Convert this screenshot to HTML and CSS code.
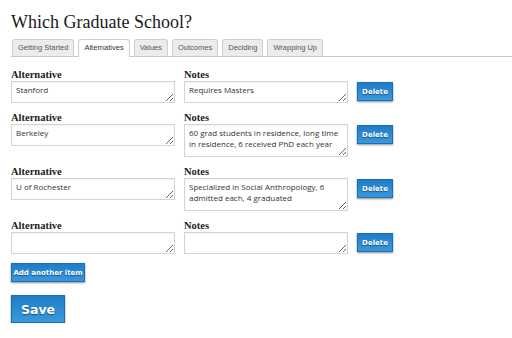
FILE: index.html
```html
<!DOCTYPE html>
<html lang="en">
<head>
    <meta charset="UTF-8">
    <title>Which Graduate School?</title>
    <link rel="stylesheet" href="styles.css">
</head>
<body>
    <div class="page">
        <h1 class="page-title">Which Graduate School?</h1>

        <ul class="tabs">
            <li class="tab">Getting Started</li>
            <li class="tab active">Alternatives</li>
            <li class="tab">Values</li>
            <li class="tab">Outcomes</li>
            <li class="tab">Deciding</li>
            <li class="tab">Wrapping Up</li>
        </ul>

        <div class="items">
            <div class="item-row">
                <div class="field">
                    <label class="field-label">Alternative</label>
                    <textarea class="field-input">Stanford</textarea>
                </div>
                <div class="field">
                    <label class="field-label">Notes</label>
                    <textarea class="field-input">Requires Masters</textarea>
                </div>
                <button class="btn btn-delete">Delete</button>
            </div>

            <div class="item-row">
                <div class="field">
                    <label class="field-label">Alternative</label>
                    <textarea class="field-input">Berkeley</textarea>
                </div>
                <div class="field">
                    <label class="field-label">Notes</label>
                    <textarea class="field-input tall">60 grad students in residence, long time in residence, 6 received PhD each year</textarea>
                </div>
                <button class="btn btn-delete">Delete</button>
            </div>

            <div class="item-row">
                <div class="field">
                    <label class="field-label">Alternative</label>
                    <textarea class="field-input">U of Rochester</textarea>
                </div>
                <div class="field">
                    <label class="field-label">Notes</label>
                    <textarea class="field-input tall">Specialized in Social Anthropology, 6 admitted each, 4 graduated</textarea>
                </div>
                <button class="btn btn-delete">Delete</button>
            </div>

            <div class="item-row">
                <div class="field">
                    <label class="field-label">Alternative</label>
                    <textarea class="field-input"></textarea>
                </div>
                <div class="field">
                    <label class="field-label">Notes</label>
                    <textarea class="field-input"></textarea>
                </div>
                <button class="btn btn-delete">Delete</button>
            </div>
        </div>

        <button class="btn btn-add">Add another item</button>
        <div>
            <button class="btn btn-save">Save</button>
        </div>
    </div>
</body>
</html>
```

FILE: styles.css
```css
body {
    margin: 0;
    background: #fff;
    color: #222;
}

.page {
    padding: 11px 0 0 11px;
}

/* Title */
.page-title {
    margin: 0;
    font-family: "Liberation Serif", Georgia, serif;
    font-weight: normal;
    font-size: 18px;
    line-height: 22px;
    color: #1a1a1a;
}

/* Tabs */
.tabs {
    list-style: none;
    margin: 6px 0 0;
    padding: 0 0 0 1px;
    display: flex;
    gap: 4px;
    border-bottom: 1px solid #c8c8c8;
    height: 17px;
}

.tab {
    height: 16px;
    padding: 0 5px;
    font-family: "Liberation Sans", Arial, sans-serif;
    font-size: 7.5px;
    line-height: 16px;
    color: #555;
    background: #ececec;
    border: 1px solid #cfcfcf;
    border-bottom: none;
    border-radius: 3px 3px 0 0;
}

.tab.active {
    background: #fff;
    height: 17px;
    color: #333;
}

/* Item rows */
.items {
    margin-top: 12px;
}

.item-row {
    display: flex;
    align-items: flex-start;
    gap: 9px;
    margin-bottom: 9px;
}

.field {
    width: 164px;
}

.field-label {
    display: block;
    font-family: "Liberation Serif", Georgia, serif;
    font-weight: bold;
    font-size: 10.5px;
    line-height: 11px;
    color: #222;
    margin-bottom: 1px;
}

.field-input {
    display: block;
    box-sizing: border-box;
    width: 164px;
    height: 22px;
    margin: 0;
    padding: 2px 4px;
    border: 1px solid #d4d4d4;
    border-radius: 0;
    font-family: "Open Sans", sans-serif;
    font-size: 8px;
    line-height: 11px;
    color: #333;
    resize: vertical;
    box-shadow: inset 0 1px 2px rgba(0, 0, 0, 0.05);
}

.field-input.tall {
    height: 33px;
}

/* Buttons */
.btn {
    font-family: "DejaVu Sans", Verdana, sans-serif;
    font-weight: bold;
    color: #fff;
    text-shadow: 0 1px 1px rgba(0, 0, 0, 0.45);
    background: linear-gradient(#1f7cc7, #3a98de);
    border: 1px solid #1c6fb2;
    border-radius: 0;
    box-shadow: 0 1px 2px rgba(0, 0, 0, 0.45);
    padding: 0;
    cursor: pointer;
}

.btn-delete {
    width: 36px;
    height: 19px;
    margin-top: 13px;
    font-size: 7px;
}

.btn-add {
    display: block;
    width: 74px;
    height: 19px;
    margin-top: 2px;
    font-size: 7px;
}

.btn-save {
    width: 54px;
    height: 28px;
    margin-top: 13px;
    font-size: 12.5px;
}
```
